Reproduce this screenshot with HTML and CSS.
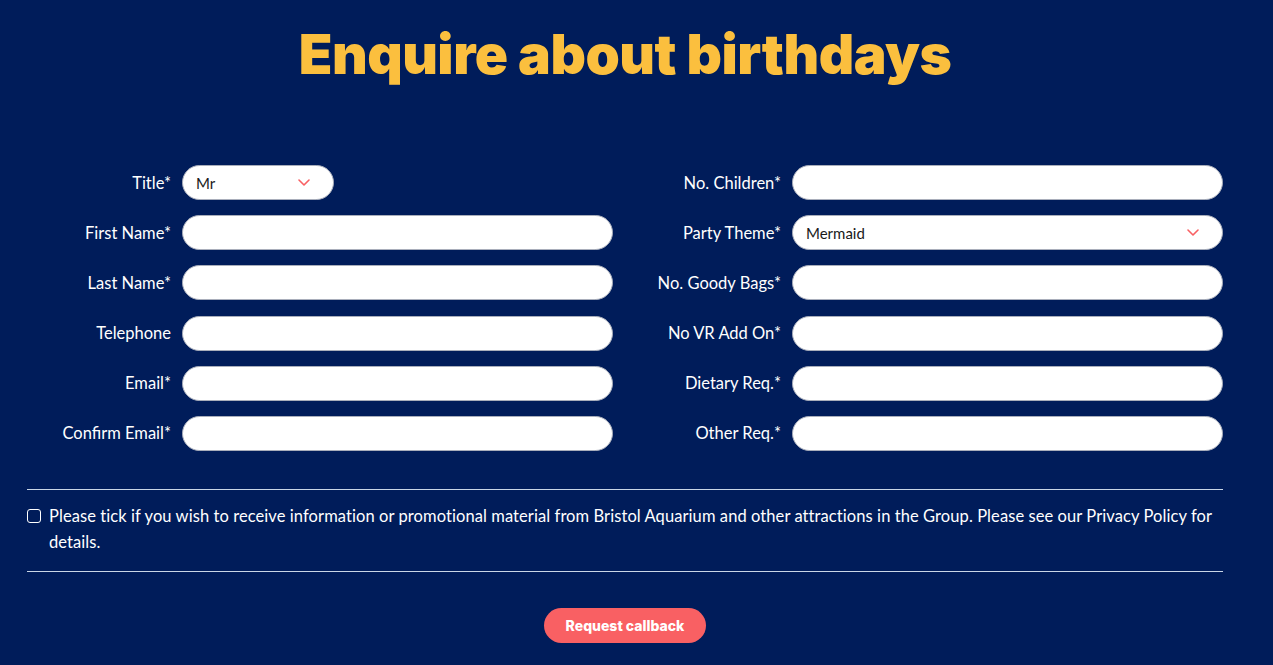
FILE: index.html
```html
<!DOCTYPE html>
<html lang="en">
<head>
<meta charset="utf-8">
<title>Enquire about birthdays</title>
<link rel="stylesheet" href="styles.css">
</head>
<body>
<main class="page">
  <h1 class="heading">Enquire about birthdays</h1>
  <form class="form">
    <div class="columns">
      <div class="col">
        <div class="row"><label class="label">Title*</label>
          <div class="select select-short"><span>Mr</span>
            <svg class="chev" width="12" height="7" viewBox="0 0 12 7"><path d="M1 1l5 5 5-5" fill="none" stroke="#f96063" stroke-width="1.6" stroke-linecap="round" stroke-linejoin="round"/></svg>
          </div></div>
        <div class="row"><label class="label">First Name*</label><div class="input"></div></div>
        <div class="row"><label class="label">Last Name*</label><div class="input"></div></div>
        <div class="row"><label class="label">Telephone</label><div class="input"></div></div>
        <div class="row"><label class="label">Email*</label><div class="input"></div></div>
        <div class="row"><label class="label">Confirm Email*</label><div class="input"></div></div>
      </div>
      <div class="col">
        <div class="row"><label class="label">No. Children*</label><div class="input"></div></div>
        <div class="row"><label class="label">Party Theme*</label>
          <div class="select"><span>Mermaid</span>
            <svg class="chev" width="12" height="7" viewBox="0 0 12 7"><path d="M1 1l5 5 5-5" fill="none" stroke="#f96063" stroke-width="1.6" stroke-linecap="round" stroke-linejoin="round"/></svg>
          </div></div>
        <div class="row"><label class="label">No. Goody Bags*</label><div class="input"></div></div>
        <div class="row"><label class="label">No VR Add On*</label><div class="input"></div></div>
        <div class="row"><label class="label">Dietary Req.*</label><div class="input"></div></div>
        <div class="row"><label class="label">Other Req.*</label><div class="input"></div></div>
      </div>
    </div>
    <div class="consent">
      <span class="box"></span>
      <p class="consent-text">Please tick if you wish to receive information or promotional material from Bristol Aquarium and other attractions in the Group. Please see our Privacy Policy for details.</p>
    </div>
    <div class="actions"><button type="button" class="btn">Request callback</button></div>
  </form>
</main>
</body>
</html>
```
FILE: styles.css
```css
html, body { margin: 0; padding: 0; }
body {
  background: #001c5a;
  font-family: Lato, "Open Sans", sans-serif;
  color: #fff;
  width: 1273px;
  height: 665px;
  overflow: hidden;
}
.page {
  margin-left: 27px;
  width: 1196px;
}
.heading {
  margin: 0;
  padding-top: 20px;
  text-align: center;
  font-family: Inter, Lato, sans-serif;
  font-weight: 900;
  font-size: 55px;
  line-height: 68px;
  color: #fbbf3e;
  letter-spacing: -0.5px;
}
.form { margin-top: 77px; }
.columns {
  display: grid;
  grid-template-columns: 586px 586px;
  column-gap: 24px;
}
.col {
  display: flex;
  flex-direction: column;
  row-gap: 15.2px;
}
.row {
  display: grid;
  grid-template-columns: 144px 431px;
  column-gap: 11px;
  align-items: center;
}
.label {
  text-align: right;
  font-size: 16.5px;
  line-height: 20px;
}
.input, .select {
  height: 35px;
  box-sizing: border-box;
  background: #fff;
  border: 1px solid #a9aebb;
  border-radius: 18px;
}
.select {
  display: flex;
  align-items: center;
  justify-content: space-between;
  padding: 0 23px 0 13px;
  color: #1a1a1a;
  font-size: 15px;
}
.select-short { width: 152px; }
.chev { display: block; }
.consent {
  margin-top: 38px;
  border-top: 1px solid #c9d6e6;
  border-bottom: 1px solid #c9d6e6;
  display: flex;
  align-items: flex-start;
  padding: 13px 0 16px;
}
.box {
  flex: none;
  width: 12px;
  height: 12px;
  border: 1px solid #fff;
  border-radius: 3px;
  margin: 6px 8px 0 0;
}
.consent-text {
  margin: 0;
  font-size: 16.5px;
  line-height: 26px;
  letter-spacing: 0.08px;
}
.actions {
  display: flex;
  justify-content: center;
  margin-top: 36px;
}
.btn {
  width: 162px;
  height: 35px;
  border: none;
  border-radius: 18px;
  background: #f96063;
  color: #fff;
  font-family: Inter, Lato, sans-serif;
  font-weight: 800;
  font-size: 14px;
}
```
